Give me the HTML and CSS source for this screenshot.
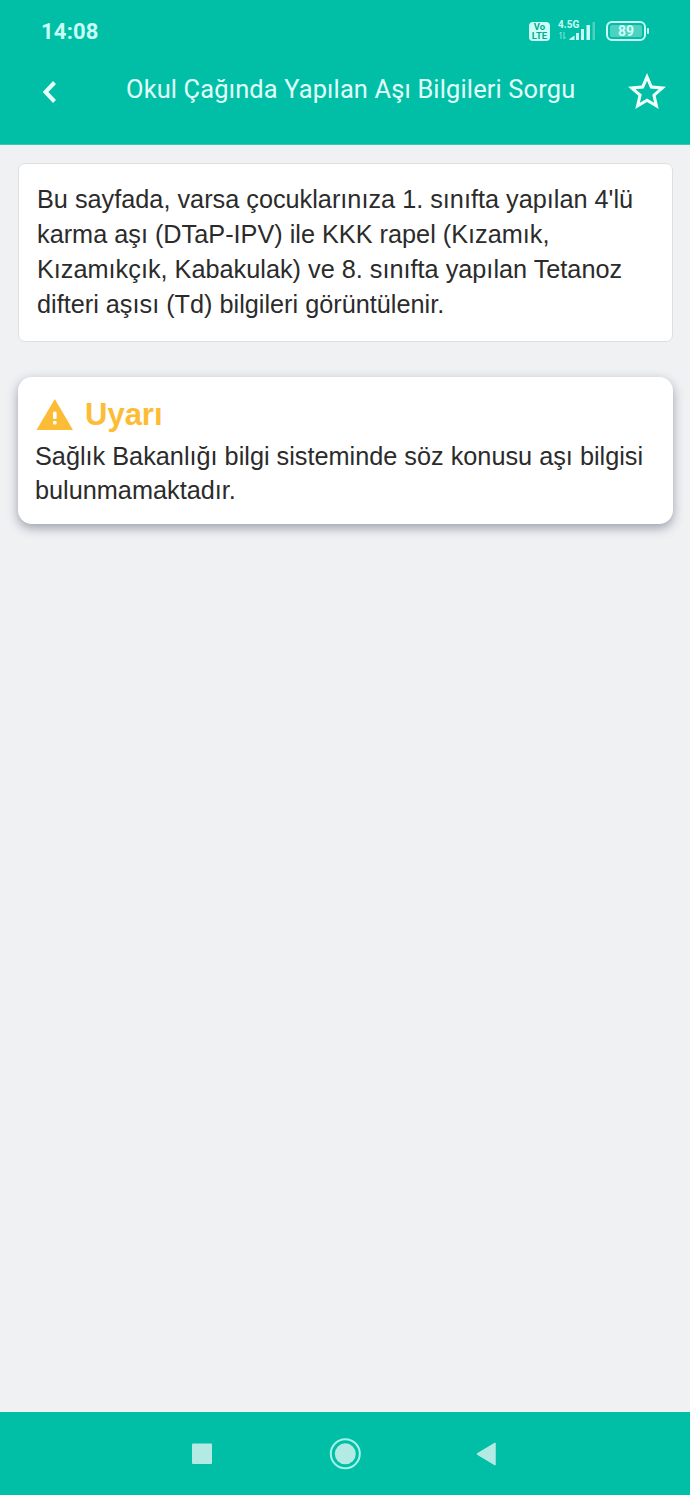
FILE: index.html
```html
<!DOCTYPE html>
<html lang="tr">
<head>
<meta charset="utf-8">
<title>Okul Çağında Yapılan Aşı Bilgileri Sorgu</title>
<link rel="stylesheet" href="styles.css">
</head>
<body>
<div class="screen">
  <header class="header">
    <div class="status">
      <span class="clock">14:08</span>
      <div class="indicators">
        <div class="volte"><span>Vo</span><span>LTE</span></div>
        <div class="signal">
          <span class="network">4.5G</span>
          <svg class="bars" width="38" height="20" viewBox="0 0 38 20">
            <g fill="none" stroke="#7fe3d5" stroke-width="1"><path d="M3 19v-7l-1.500 2M6 12v7l1.500-2"/></g>
            <g fill="#c9fff7"><path d="M11.500 20v-1l5-3.500v4.500z"/><rect x="18" y="13" width="3" height="7"/><rect x="23" y="9" width="3" height="11"/><rect x="28.500" y="5" width="3.500" height="15"/></g>
            <rect x="34.500" y="2" width="2.500" height="18" fill="#4dd2c1"/>
          </svg>
        </div>
        <div class="battery"><span>89</span></div>
      </div>
    </div>
    <div class="toolbar">
      <svg class="back" width="16" height="24" viewBox="0 0 16 24"><path d="M13.500 2.500 4.500 12l9 9.500" fill="none" stroke="#e9fffb" stroke-width="4"/></svg>
      <h1 class="title">Okul Çağında Yapılan Aşı Bilgileri Sorgu</h1>
      <svg class="star" width="38" height="37" viewBox="2 2 20 19.500"><path fill="#f0fffd" d="M22 9.240l-7.190-.62L12 2 9.190 8.630 2 9.240l5.460 4.730L5.820 21 12 17.270 18.180 21l-1.630-7.030L22 9.240zM12 15.400l-3.760 2.270 1-4.280-3.320-2.880 4.380-.38L12 6.100l1.710 4.040 4.380.38-3.320 2.880 1 4.280L12 15.400z"/></svg>
    </div>
  </header>
  <main class="content">
    <section class="info">Bu sayfada, varsa çocuklarınıza 1. sınıfta yapılan 4'lü<br>karma aşı (DTaP-IPV) ile KKK rapel (Kızamık,<br>Kızamıkçık, Kabakulak) ve 8. sınıfta yapılan Tetanoz<br>difteri aşısı (Td) bilgileri görüntülenir.</section>
    <section class="alert">
      <div class="alert-head">
        <svg class="warn" width="37" height="32" viewBox="0 0 37 32"><path fill="#fdbc35" d="M18.800 0 37 31H.500z"/><rect x="17" y="12.500" width="3.600" height="7.500" rx="1.500" fill="#fff"/><rect x="17" y="22" width="3.600" height="3.600" rx="1" fill="#fff"/></svg>
        <h2 class="alert-title">Uyarı</h2>
      </div>
      <p class="alert-text">Sağlık Bakanlığı bilgi sisteminde söz konusu aşı bilgisi<br>bulunmamaktadır.</p>
    </section>
  </main>
  <nav class="nav">
    <svg width="22" height="32" viewBox="0 0 22 32"><rect x="2" y="5.500" width="20" height="20.500" rx="1" fill="#b3ebe4"/></svg>
    <svg width="32" height="32" viewBox="0 0 32 32"><circle cx="16.300" cy="15.800" r="14.500" fill="none" stroke="#a4f3e7" stroke-width="2"/><circle cx="16.300" cy="15.800" r="10.500" fill="#b3ebe4"/></svg>
    <svg class="nav-back" width="22" height="32" viewBox="0 0 22 32"><path d="M2.500 16 20 5.500v21z" fill="#b3ebe4" stroke="#b3ebe4" stroke-width="1.500" stroke-linejoin="round"/></svg>
  </nav>
</div>
</body>
</html>
```
FILE: styles.css
```css
* { box-sizing: border-box; }
body { margin: 0; background: #f0f1f3; }
.screen { display: flex; flex-direction: column; width: 690px; height: 1495px; overflow: hidden; font-family: "Liberation Sans", Arial, sans-serif; color: #2b2b2b; }
.header { height: 145px; flex: none; background: #01bfa6; border-bottom: 1px solid #35c8b5; font-family: Roboto, sans-serif; }
.status { display: flex; justify-content: space-between; height: 62px; padding: 20px 44px 0 41px; }
.clock { font-size: 22px; line-height: 24px; font-weight: 700; letter-spacing: 0.2px; color: #c9fff7; }
.indicators { display: flex; }
.volte { display: flex; flex-direction: column; width: 21px; height: 19px; margin-top: 2px; padding-top: 1px; border-radius: 4px; background: #c9fff7; color: #0aa893; font-size: 9.500px; line-height: 8.500px; font-weight: 700; align-items: center; }
.signal { display: flex; flex-direction: column; width: 38px; margin-left: 8px; }
.network { height: 0; font-size: 10px; line-height: 10px; font-weight: 700; color: #c9fff7; }
.bars { display: block; }
.battery { display: flex; position: relative; width: 40px; height: 20px; margin: 1px 0 0 10px; border: 2px solid #c9fff7; border-radius: 6px; padding: 2px; }
.battery span { flex: 1; background: #4dd2c1; border-radius: 2px; color: #d5fff9; font-size: 14px; line-height: 13px; font-weight: 700; text-align: center; }
.battery::after { content: ""; position: absolute; right: -5px; top: 5px; width: 2px; height: 6px; background: #c9fff7; border-radius: 1px; }
.toolbar { display: flex; padding: 11px 24px 0 41px; }
.back { margin-top: 7px; }
.title { margin: 1px 0 0 69px; width: 449px; font-size: 25.400px; line-height: 31px; font-weight: 400; letter-spacing: 0.160px; color: #e1fffa; white-space: nowrap; }
.star { margin-left: auto; }
.content { flex: 1; padding: 18px 17px 0 18px; }
.info { height: 179px; padding: 18px; border: 1px solid #dddfe1; border-radius: 7px; background: #fff; font-size: 25.270px; line-height: 35.100px; white-space: nowrap; }
.alert { height: 147px; margin-top: 35px; padding: 20px 17px; border-radius: 14px; background: #fff; box-shadow: 0 4px 11px rgba(65, 70, 95, 0.48); }
.alert-head { display: flex; gap: 12px; height: 43px; padding: 2px 0 0 1px; }
.alert-title { margin: -2px 0 0; color: #fdbc35; font-size: 31px; line-height: 36px; font-weight: 700; }
.alert-text { margin: 0; font-size: 25.270px; line-height: 33.700px; white-space: nowrap; }
.nav { display: flex; justify-content: center; gap: 117px; flex: none; height: 83px; padding-top: 26px; background: #01bfa6; }
.nav-back { margin: 0 3px 0 -3px; }
```
